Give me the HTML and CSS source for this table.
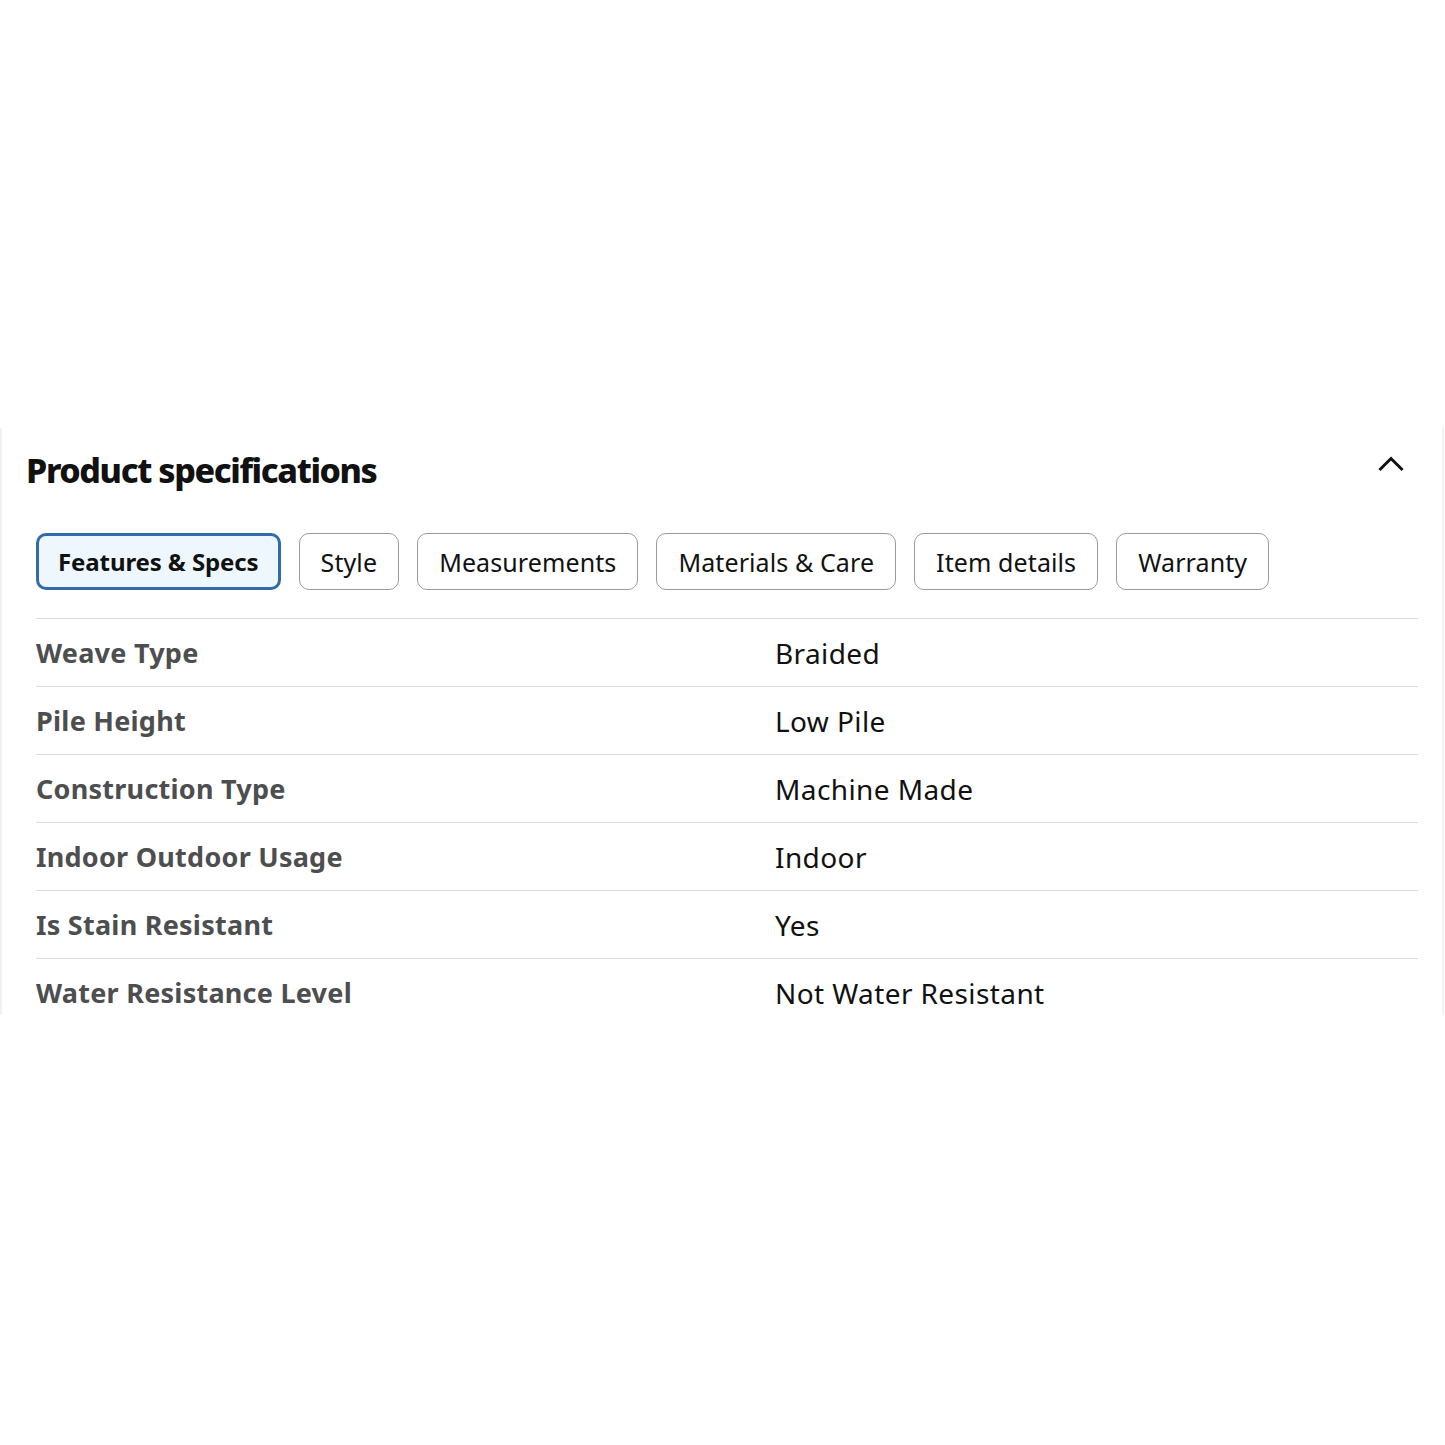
FILE: index.html
```html
<!DOCTYPE html>
<html lang="en">
<head>
    <meta charset="UTF-8">
    <meta name="viewport" content="width=device-width, initial-scale=1.0">
    <title>Product specifications</title>
    <link rel="stylesheet" href="styles.css">
</head>
<body>
    <section class="spec-panel">
        <div class="spec-header">
            <h2 class="spec-title">Product specifications</h2>
            <button class="collapse-btn" aria-label="Collapse">
                <svg width="26" height="18" viewBox="0 0 26 18" fill="none">
                    <path d="M2.5 15 L13 4.5 L23.5 15" stroke="#111" stroke-width="3" stroke-linecap="square"/>
                </svg>
            </button>
        </div>

        <div class="tabs">
            <button class="tab active">Features &amp; Specs</button>
            <button class="tab">Style</button>
            <button class="tab">Measurements</button>
            <button class="tab">Materials &amp; Care</button>
            <button class="tab">Item details</button>
            <button class="tab">Warranty</button>
        </div>

        <div class="spec-table">
            <div class="spec-row">
                <div class="spec-label">Weave Type</div>
                <div class="spec-value">Braided</div>
            </div>
            <div class="spec-row">
                <div class="spec-label">Pile Height</div>
                <div class="spec-value">Low Pile</div>
            </div>
            <div class="spec-row">
                <div class="spec-label">Construction Type</div>
                <div class="spec-value">Machine Made</div>
            </div>
            <div class="spec-row">
                <div class="spec-label">Indoor Outdoor Usage</div>
                <div class="spec-value">Indoor</div>
            </div>
            <div class="spec-row">
                <div class="spec-label">Is Stain Resistant</div>
                <div class="spec-value">Yes</div>
            </div>
            <div class="spec-row">
                <div class="spec-label">Water Resistance Level</div>
                <div class="spec-value">Not Water Resistant</div>
            </div>
        </div>
    </section>
</body>
</html>
```

FILE: styles.css
```css
:root {
    --text: #111111;
    --label: #4d4e50;
    --border: #dcdcdc;
    --tab-border: #9a9a9a;
    --active: #2f6ca8;
    --active-bg: #eef7fd;
}

* {
    margin: 0;
    padding: 0;
    box-sizing: border-box;
    font-family: "Noto Sans", "Open Sans", sans-serif;
}

body {
    background: #ffffff;
    padding-top: 428px;
}

.spec-panel {
    height: 587px;
    overflow: hidden;
    border-left: 2px solid #f2f2f2;
    border-right: 2px solid #f2f2f2;
    margin-right: 1px;
    padding: 0 24px 0 0;
}

.spec-header {
    display: flex;
    align-items: center;
    justify-content: space-between;
    padding: 0 14px 0 24px;
    height: 84px;
    padding-top: 0;
}

.spec-title {
    font-size: 34px;
    font-weight: 800;
    letter-spacing: -1.4px;
    color: var(--text);
}

.collapse-btn {
    background: none;
    border: none;
    cursor: pointer;
    display: flex;
    margin-top: -14px;
}

.tabs {
    display: flex;
    gap: 18px;
    padding: 21px 0 0 34px;
}

.tab {
    height: 57px;
    padding: 0 21px;
    border: 1px solid var(--tab-border);
    border-radius: 10px;
    background: #ffffff;
    font-size: 25px;
    letter-spacing: 0.1px;
    color: var(--text);
    cursor: pointer;
}

.tab.active {
    border: 3px solid var(--active);
    background: var(--active-bg);
    font-size: 24px;
    font-weight: 700;
    letter-spacing: -0.1px;
    padding: 0 19px;
}

.spec-table {
    margin: 28px 0 0 34px;
}

.spec-row {
    display: grid;
    grid-template-columns: 739px 1fr;
    align-items: center;
    height: 68px;
    border-top: 1.5px solid var(--border);
}

.spec-label {
    font-size: 27px;
    font-weight: 700;
    letter-spacing: 0.25px;
    color: var(--label);
}

.spec-value {
    font-size: 28px;
    letter-spacing: 0.4px;
    color: var(--text);
}
```
